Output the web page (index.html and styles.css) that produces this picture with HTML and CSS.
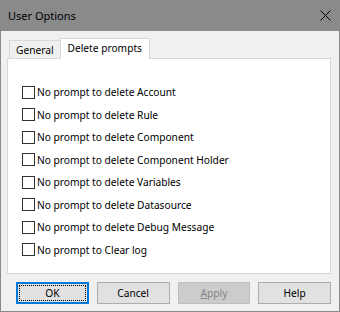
FILE: index.html
```html
<!DOCTYPE html>
<html lang="en">
<head>
    <meta charset="UTF-8">
    <title>User Options</title>
    <link rel="stylesheet" href="styles.css">
</head>
<body>

<div class="window">
    <!-- Barra de titulo -->
    <div class="titlebar">
        <span class="title">User Options</span>
        <svg class="close" width="11" height="11" viewBox="0 0 11 11">
            <path d="M0.5 0.5 L10.5 10.5 M10.5 0.5 L0.5 10.5" stroke="#000" stroke-width="1" fill="none"/>
        </svg>
    </div>

    <div class="body">
        <div class="tabs">
            <div class="tab">General</div>
            <div class="tab active">Delete prompts</div>
        </div>
        <div class="panel">
            <label class="check"><span class="box"></span>No prompt to delete Account</label>
            <label class="check"><span class="box"></span>No prompt to delete Rule</label>
            <label class="check"><span class="box"></span>No prompt to delete Component</label>
            <label class="check"><span class="box"></span>No prompt to delete Component Holder</label>
            <label class="check"><span class="box"></span>No prompt to delete Variables</label>
            <label class="check"><span class="box"></span>No prompt to delete Datasource</label>
            <label class="check"><span class="box"></span>No prompt to delete Debug Message</label>
            <label class="check"><span class="box"></span>No prompt to Clear log</label>
        </div>

        <div class="buttons">
            <button class="btn default"><span class="focus">OK</span></button>
            <button class="btn">Cancel</button>
            <button class="btn disabled"><span><u>A</u>pply</span></button>
            <button class="btn">Help</button>
        </div>
    </div>
</div>

</body>
</html>
```

FILE: styles.css
```css
* {
    box-sizing: border-box;
}
body {
    margin: 0;
    font-family: "Noto Sans", "Liberation Sans", sans-serif;
    font-size: 10.2px;
    color: #000;
}
.window {
    width: 340px;
    height: 312px;
    border: 1px solid #8a8a8a;
    border-top: none;
    background-color: #f0f0f0;
}
.titlebar {
    height: 31px;
    background-color: #8a8a8a;
    display: flex;
    align-items: center;
    justify-content: space-between;
    padding: 0 9px 1px 8px;
    margin: 0 -1px;
}
.title {
    font-size: 11px;
    color: #000;
}
.close {
    display: block;
    margin-top: 1px;
}
.body {
    padding: 7px 8px 0 6px;
}
.tabs {
    display: flex;
    align-items: flex-end;
    height: 20px;
    padding-left: 2px;
    position: relative;
    z-index: 1;
}
.tab {
    height: 18px;
    padding: 1px 6px 0 6px;
    border: 1px solid #d9d9d9;
    border-bottom: none;
    border-right: none;
    background-color: #f0f0f0;
    line-height: 17px;
}
.tab.active {
    height: 21px;
    margin-bottom: -1px;
    padding: 0 7px;
    border-right: 1px solid #d9d9d9;
    background-color: #fff;
    line-height: 18px;
}
.panel {
    height: 216px;
    border: 1px solid #d9d9d9;
    background-color: #fff;
    padding: 22px 0 0 14px;
}
.check {
    display: flex;
    align-items: center;
    height: 22.5px;
    gap: 2px;
}
.box {
    width: 13px;
    height: 13px;
    border: 1px solid #333;
    background-color: #fff;
}
.buttons {
    display: flex;
    gap: 8px;
    padding: 8px 0 0 9px;
}
.btn {
    width: 73px;
    height: 22px;
    padding: 0;
    border: 1px solid #adadad;
    background-color: #e1e1e1;
    font-family: inherit;
    font-size: 10.2px;
    color: #000;
}
.btn.default {
    border: 2px solid #0078d7;
    padding: 1px;
}
.btn.default .focus {
    display: block;
    height: 16px;
    border: 1px dotted #000;
    line-height: 14px;
}
.btn.disabled {
    border-color: #bfbfbf;
    background-color: #cccccc;
    color: #838383;
}
```
